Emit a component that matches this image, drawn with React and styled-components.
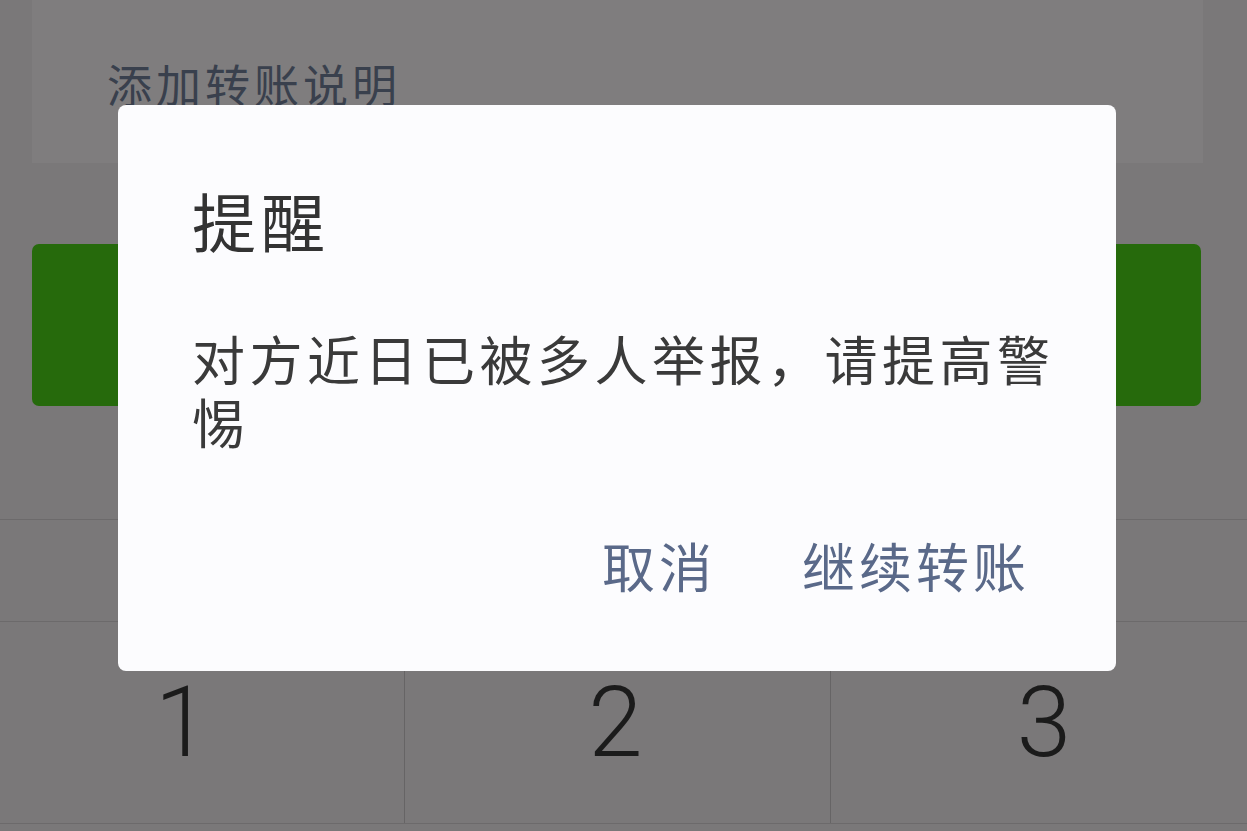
import styled, { createGlobalStyle } from 'styled-components';

const GlobalStyle = createGlobalStyle`
  html, body {
    margin: 0;
    padding: 0;
    background: #7a7879;
  }
  body {
    font-family: "Noto Sans CJK SC", "Noto Sans", sans-serif;
  }
`;

const CJK = '"Noto Sans CJK SC", "Noto Sans", sans-serif';

const Screen = styled.div`
  position: relative;
  width: 1247px;
  height: 831px;
  overflow: hidden;
  background: #7a7879;
  display: flex;
  flex-direction: column;
`;

const RemarkCard = styled.div`
  height: 163px;
  margin: 0 44px 0 32px;
  background: #7f7d7e;
  box-sizing: border-box;
  padding: 56px 0 0 75px;
`;

const RemarkText = styled.span`
  font-family: ${CJK};
  font-size: 45px;
  line-height: 56px;
  letter-spacing: 4px;
  color: #39404d;
`;

const PayButton = styled.div`
  height: 162px;
  margin: 81px 46px 0 32px;
  border-radius: 7px;
  background: #266a0c;
`;

const Keypad = styled.div`
  margin-top: 113px;
  display: flex;
  flex-direction: column;
`;

const KeypadHeader = styled.div`
  height: 101px;
  border-top: 1px solid #6c6a6b;
`;

const KeyRow = styled.div`
  display: grid;
  grid-template-columns: 404px 426px 1fr;
  height: 201px;
  border-top: 1px solid #6c6a6b;
  border-bottom: 1px solid #6c6a6b;
`;

const Key = styled.div`
  display: flex;
  align-items: center;
  justify-content: center;
  padding: ${({ $shift }) => ($shift < 0 ? `0 ${-$shift}px 0 0` : `0 0 0 ${$shift}px`)};
  border-left: ${({ $first }) => ($first ? 'none' : '1px solid #666465')};
  font-family: Roboto, "Liberation Sans", sans-serif;
  font-weight: 300;
  font-size: 98px;
  color: #1b1b1b;
`;

const Dialog = styled.div`
  position: absolute;
  left: 118px;
  top: 105px;
  width: 998px;
  height: 566px;
  box-sizing: border-box;
  padding: 76px 40px 0 74px;
  border-radius: 8px;
  background: #fcfcfe;
  display: flex;
  flex-direction: column;
`;

const DialogTitle = styled.div`
  font-family: ${CJK};
  font-size: 64px;
  line-height: 76px;
  letter-spacing: 5px;
  color: #333333;
`;

const DialogBody = styled.div`
  margin-top: 70px;
  font-family: ${CJK};
  font-size: 53px;
  line-height: 63px;
  letter-spacing: 4.5px;
  color: #3a3a3a;
`;

const DialogActions = styled.div`
  margin-top: 81px;
  display: flex;
  justify-content: flex-end;
  gap: 86px;
  padding-right: 46px;
`;

const ActionButton = styled.span`
  font-family: ${CJK};
  font-size: 53px;
  line-height: 63px;
  letter-spacing: 4px;
  color: #5a6989;
`;

export default function App() {
  return (
    <>
      <GlobalStyle />
      <Screen>
        <RemarkCard>
          <RemarkText>添加转账说明</RemarkText>
        </RemarkCard>
        <PayButton />
        <Keypad>
          <KeypadHeader />
          <KeyRow>
            <Key $first $shift={-40}>1</Key>
            <Key $shift={-4}>2</Key>
            <Key $shift={10}>3</Key>
          </KeyRow>
        </Keypad>
        <Dialog>
          <DialogTitle>提醒</DialogTitle>
          <DialogBody>对方近日已被多人举报，请提高警惕</DialogBody>
          <DialogActions>
            <ActionButton>取消</ActionButton>
            <ActionButton>继续转账</ActionButton>
          </DialogActions>
        </Dialog>
      </Screen>
    </>
  );
}
